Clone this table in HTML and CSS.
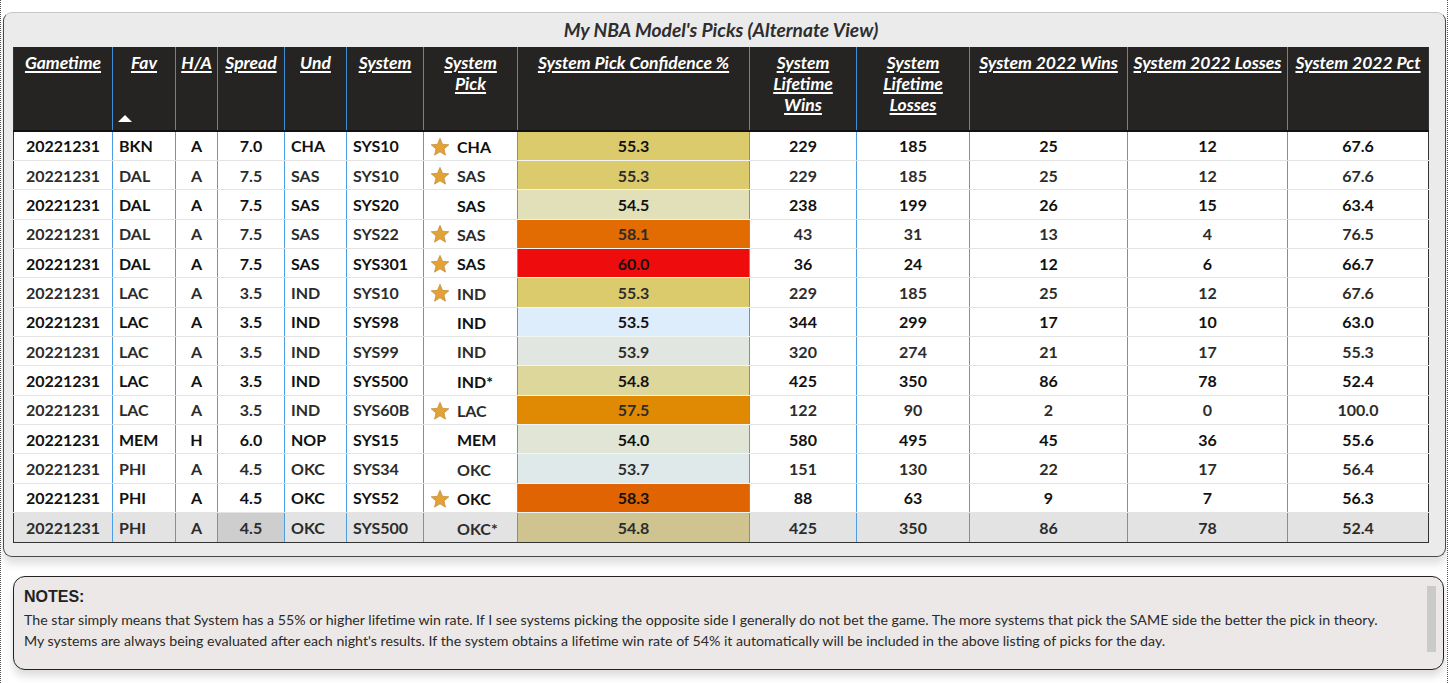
FILE: index.html
```html
<!DOCTYPE html>
<html lang="en">
<head>
<meta charset="utf-8">
<title>My NBA Model's Picks (Alternate View)</title>
<link rel="stylesheet" href="styles.css">
</head>
<body>
<div class="frame">
  <section class="card">
    <div class="title">My NBA Model's Picks (Alternate View)</div>
    <table class="picks">
      <colgroup>
        <col class="w-time"><col class="w-fav"><col class="w-ha"><col class="w-spread"><col class="w-und"><col class="w-sys"><col class="w-pick"><col class="w-conf"><col class="w-lw"><col class="w-ll"><col class="w-yw"><col class="w-yl"><col class="w-pct">
      </colgroup>
      <thead>
        <tr>
          <th><span class="u">Gametime</span></th>
          <th class="sortable"><span class="u">Fav</span><span class="sort"></span></th>
          <th><span class="u">H/A</span></th>
          <th><span class="u">Spread</span></th>
          <th><span class="u">Und</span></th>
          <th><span class="u">System</span></th>
          <th><span class="u">System</span><br><span class="u">Pick</span></th>
          <th><span class="u">System Pick Confidence %</span></th>
          <th><span class="u">System</span><br><span class="u">Lifetime</span><br><span class="u">Wins</span></th>
          <th><span class="u">System</span><br><span class="u">Lifetime</span><br><span class="u">Losses</span></th>
          <th><span class="u">System 2022 Wins</span></th>
          <th><span class="u">System 2022 Losses</span></th>
          <th><span class="u">System 2022 Pct</span></th>
        </tr>
      </thead>
      <tbody id="rows"></tbody>
    </table>
  </section>
  <section class="notes">
    <div class="notes-body">
      <div class="notes-title">NOTES:</div>
      <div class="notes-text">
        <div>The star simply means that System has a 55% or higher lifetime win rate. If I see systems picking the opposite side I generally do not bet the game. The more systems that pick the SAME side the better the pick in theory.</div>
        <div>My systems are always being evaluated after each night's results. If the system obtains a lifetime win rate of 54% it automatically will be included in the above listing of picks for the day.</div>
      </div>
    </div>
    <div class="notes-scroll"></div>
  </section>
</div>
<script src="app.js"></script>
</body>
</html>
```

FILE: app.js
```js
const data = [
  ["20221231","BKN","A","7.0","CHA","SYS10",true,"CHA","55.3","#dccb6c","229","185","25","12","67.6"],
  ["20221231","DAL","A","7.5","SAS","SYS10",true,"SAS","55.3","#dccb6c","229","185","25","12","67.6"],
  ["20221231","DAL","A","7.5","SAS","SYS20",false,"SAS","54.5","#e1e0b9","238","199","26","15","63.4"],
  ["20221231","DAL","A","7.5","SAS","SYS22",true,"SAS","58.1","#e26b02","43","31","13","4","76.5"],
  ["20221231","DAL","A","7.5","SAS","SYS301",true,"SAS","60.0","#ee0c0c","36","24","12","6","66.7"],
  ["20221231","LAC","A","3.5","IND","SYS10",true,"IND","55.3","#dccb6c","229","185","25","12","67.6"],
  ["20221231","LAC","A","3.5","IND","SYS98",false,"IND","53.5","#ddedfb","344","299","17","10","63.0"],
  ["20221231","LAC","A","3.5","IND","SYS99",false,"IND","53.9","#e1e6e1","320","274","21","17","55.3"],
  ["20221231","LAC","A","3.5","IND","SYS500",false,"IND*","54.8","#ded79c","425","350","86","78","52.4"],
  ["20221231","LAC","A","3.5","IND","SYS60B",true,"LAC","57.5","#e08a04","122","90","2","0","100.0"],
  ["20221231","MEM","H","6.0","NOP","SYS15",false,"MEM","54.0","#e0e5d6","580","495","45","36","55.6"],
  ["20221231","PHI","A","4.5","OKC","SYS34",false,"OKC","53.7","#dfe9e9","151","130","22","17","56.4"],
  ["20221231","PHI","A","4.5","OKC","SYS52",true,"OKC","58.3","#e06502","88","63","9","7","56.3"],
  ["20221231","PHI","A","4.5","OKC","SYS500",false,"OKC*","54.8","#cfc48f","425","350","86","78","52.4"]
];
const star = '<svg class="star" viewBox="0 0 24 24" width="20" height="20"><path d="M12 1.6l3 7.1 7.6.6-5.8 5 1.8 7.5L12 17.8l-6.6 4 1.8-7.5-5.8-5 7.6-.6z" fill="#e2a236" stroke="#b47a22" stroke-width="0.7" stroke-linejoin="round"/></svg>';
const tbody = document.getElementById("rows");
data.forEach((r, i) => {
  const tr = document.createElement("tr");
  if (i % 2 === 1) tr.classList.add("alt");
  if (i === data.length - 1) tr.classList.add("sel");
  tr.innerHTML =
    `<td>${r[0]}</td>` +
    `<td class="l">${r[1]}</td>` +
    `<td>${r[2]}</td>` +
    `<td class="spread">${r[3]}</td>` +
    `<td class="l">${r[4]}</td>` +
    `<td class="l">${r[5]}</td>` +
    `<td class="l pick"><span class="pick-in"><span class="star-slot">${r[6] ? star : ""}</span><span class="pick-txt">${r[7]}</span></span></td>` +
    `<td class="conf" style="background:${r[9]}">${r[8]}</td>` +
    `<td>${r[10]}</td><td>${r[11]}</td><td>${r[12]}</td><td>${r[13]}</td><td>${r[14]}</td>`;
  tbody.appendChild(tr);
});
```

FILE: styles.css
```css
html, body {
  margin: 0;
  padding: 0;
  background: #ffffff;
}

body {
  font-family: Lato, "Open Sans", "Liberation Sans", sans-serif;
}

.frame {
  width: 1448px;
  height: 683px;
  box-sizing: border-box;
  border-left: 1px dotted #555;
  border-right: 1px dotted #555;
  padding: 12px 1px 0 2px;
  display: flex;
  flex-direction: column;
  overflow: hidden;
}

.card {
  border: 1px solid #4a4a4a;
  border-top-color: #c8c8c8;
  border-radius: 9px;
  background: #ebebeb;
  padding: 0 16px 13px 9px;
  box-shadow: 0 7px 9px rgba(0, 0, 0, 0.13);
}

.title {
  height: 34px;
  line-height: 34px;
  text-align: center;
  font-size: 19.2px;
  font-weight: 700;
  font-style: italic;
  color: #2e2e2e;
}

.picks {
  width: 100%;
  table-layout: fixed;
  border-collapse: collapse;
  background: #fff;
  border: 1px solid #333;
  border-top: none;
}

.w-time { width: 99px; }
.w-fav { width: 63px; }
.w-ha { width: 42px; }
.w-spread { width: 67px; }
.w-und { width: 62px; }
.w-sys { width: 77px; }
.w-pick { width: 94px; }
.w-conf { width: 232px; }
.w-lw { width: 107px; }
.w-ll { width: 113px; }
.w-yw { width: 158px; }
.w-yl { width: 160px; }
.w-pct { width: 141px; }

.picks thead tr {
  height: 84px;
}

.picks th {
  background: #252422;
  color: #fff;
  font-size: 17.5px;
  font-weight: 700;
  font-style: italic;
  line-height: 21px;
  vertical-align: top;
  text-align: center;
  padding: 5px 1px 0;
  white-space: nowrap;
  border-left: 1px solid #3f8fd6;
  border-bottom: 2px solid #111;
}

.picks th:first-child {
  border-left: 1px solid #333;
}

.u {
  text-decoration: underline;
  text-underline-offset: 2px;
  text-decoration-thickness: 1.5px;
}

.sortable {
  position: relative;
}

.sort {
  position: absolute;
  left: 5px;
  bottom: 8px;
  width: 0;
  height: 0;
  border-left: 7px solid transparent;
  border-right: 7px solid transparent;
  border-bottom: 7px solid #fff;
}

.picks tbody tr {
  height: 29.36px;
}

.picks td {
  font-size: 16px;
  font-weight: 700;
  color: #111;
  text-align: center;
  vertical-align: middle;
  padding: 0 6px;
  white-space: nowrap;
  border-left: 1px solid #4a9ee6;
  border-bottom: 1px solid #e4e4e4;
}

.picks td:first-child {
  border-left: 1px solid #333;
}

.picks tr.alt td {
  color: #2c2c2c;
}

.picks td.l {
  text-align: left;
}

.picks td.pick {
  padding-left: 6px;
}

.pick-in {
  display: inline-flex;
  align-items: center;
  gap: 7px;
  vertical-align: middle;
}

.pick-txt {
  line-height: 20px;
  padding-top: 1px;
}

.star-slot {
  display: inline-flex;
  width: 20px;
  height: 20px;
}

.star {
  display: block;
}

.picks td.conf {
  border-bottom-color: #f4f4f4;
}

.picks tr.sel td {
  background: #e3e3e3;
  border-bottom: 1px solid #333;
}

.picks tr.sel td.spread {
  background: #cecece;
}

.notes {
  margin: 19px 2px 0 10px;
  height: 94px;
  box-sizing: border-box;
  border: 1px solid #222;
  border-radius: 12px;
  background: #ebe8e7;
  display: flex;
  box-shadow: 0 6px 8px rgba(0, 0, 0, 0.14);
}

.notes-body {
  flex: 1;
  padding: 10px 10px 0 10px;
}

.notes-title {
  font-family: "Liberation Sans", Arial, sans-serif;
  font-weight: 700;
  font-size: 16px;
  line-height: 20px;
  color: #222;
}

.notes-text {
  margin-top: 2px;
  font-size: 14.2px;
  line-height: 21px;
  color: #2a2a2a;
  white-space: nowrap;
}

.notes-scroll {
  width: 9px;
  margin: 9px 7px 17px 0;
  background: #cacaca;
}
```
